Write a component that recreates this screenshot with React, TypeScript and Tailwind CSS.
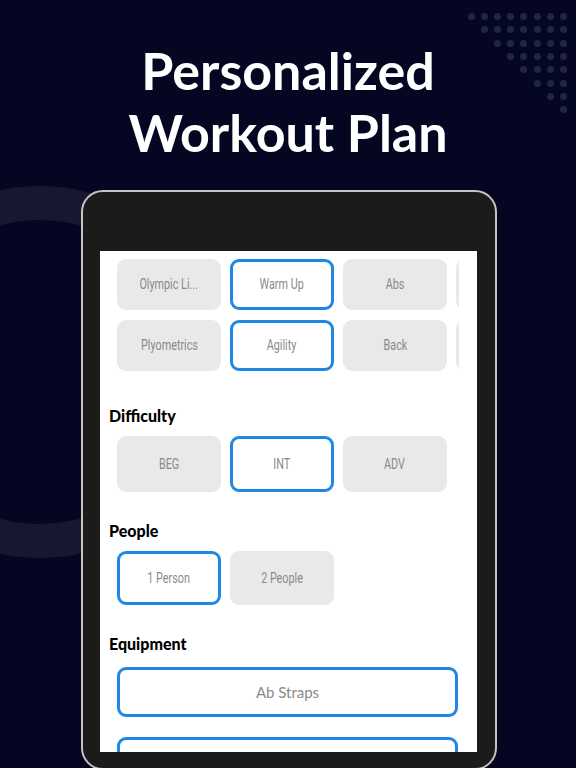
import React from "react";

type Option = { label: string; selected?: boolean };

const categoryRows: Option[][] = [
  [{ label: "Olympic Li..." }, { label: "Warm Up", selected: true }, { label: "Abs" }, { label: "Chest" }],
  [{ label: "Plyometrics" }, { label: "Agility", selected: true }, { label: "Back" }, { label: "Arms" }],
];

const difficulty: Option[] = [{ label: "BEG" }, { label: "INT", selected: true }, { label: "ADV" }];
const people: Option[] = [{ label: "1 Person", selected: true }, { label: "2 People" }];

function Chip({ option, h }: { option: Option; h: string }) {
  return (
    <div
      className={`flex w-[104px] shrink-0 items-center justify-center overflow-hidden rounded-[9px] text-[#8a8a8a] ${h} ${
        option.selected ? "border-[3px] border-[#1e88e5] bg-white" : "bg-[#e9e9e9]"
      }`}
    >
      {/* narrow face: squeeze Roboto horizontally */}
      <span
        className="inline-block scale-x-[0.72] whitespace-nowrap text-[15px]"
        style={{ fontFamily: "Roboto, sans-serif" }}
      >
        {option.label}
      </span>
    </div>
  );
}

function SectionLabel({ children, top }: { children: React.ReactNode; top: string }) {
  return (
    <div className={`pl-[9px] text-[16px] leading-[20px] font-black text-black ${top}`} style={{ fontFamily: "Lato, sans-serif" }}>
      {children}
    </div>
  );
}

// triangle of dots in the top-right corner
function DotField() {
  const cells = [];
  for (let r = 0; r < 8; r++) {
    for (let c = 0; c < 8; c++) {
      cells.push(
        <div key={`${r}-${c}`} className="flex h-[13.3px] w-[13.1px] items-center justify-center">
          {c >= r && <div className="h-[7px] w-[7px] rounded-full bg-[#212446]" />}
        </div>
      );
    }
  }
  return <div className="absolute left-[465px] top-[10px] grid grid-cols-8">{cells}</div>;
}

export default function App() {
  return (
    <div className="relative flex h-[768px] w-[576px] flex-col overflow-hidden bg-[#050722]">
      <div className="absolute left-[-146px] top-[186px] h-[372px] w-[372px] rounded-full border-[34px] border-white/[0.07]" />
      <DotField />

      <h1
        className="relative pt-[39px] text-center text-[52px] leading-[62px] font-bold text-white"
        style={{ fontFamily: "Lato, sans-serif" }}
      >
        Personalized
        <br />
        Workout Plan
      </h1>

      <div className="relative ml-[81px] mt-[27px] w-[416px] shrink-0 rounded-[22px] border-2 border-[#c4c4c4] bg-[#1b1b1b] pb-[16px] pl-[17px] pr-[18px] pt-[59px]">
        <div className="h-[501px] overflow-hidden bg-white pt-[8px]">
          <div className="ml-[17px] flex w-[342px] flex-col gap-[10px] overflow-hidden">
            {categoryRows.map((row, i) => (
              <div key={i} className="flex gap-[9px]">
                {row.map((o) => (
                  <Chip key={o.label} option={o} h="h-[51px]" />
                ))}
              </div>
            ))}
          </div>

          <SectionLabel top="mt-[35px]">Difficulty</SectionLabel>
          <div className="ml-[17px] mt-[10px] flex gap-[9px]">
            {difficulty.map((o) => (
              <Chip key={o.label} option={o} h="h-[56px]" />
            ))}
          </div>

          <SectionLabel top="mt-[29px]">People</SectionLabel>
          <div className="ml-[17px] mt-[10px] flex gap-[9px]">
            {people.map((o) => (
              <Chip key={o.label} option={o} h="h-[54px]" />
            ))}
          </div>

          <SectionLabel top="mt-[29px]">Equipment</SectionLabel>
          <div className="ml-[17px] mt-[13px] flex w-[341px] flex-col gap-[20px]">
            {["Ab Straps", "Bands"].map((label) => (
              <div
                key={label}
                className="flex h-[50px] items-center justify-center rounded-[9px] border-[3px] border-[#1e88e5] bg-white text-[15px] text-[#8a8a8a]"
                style={{ fontFamily: "Lato, sans-serif" }}
              >
                {label}
              </div>
            ))}
          </div>
        </div>
      </div>
    </div>
  );
}
